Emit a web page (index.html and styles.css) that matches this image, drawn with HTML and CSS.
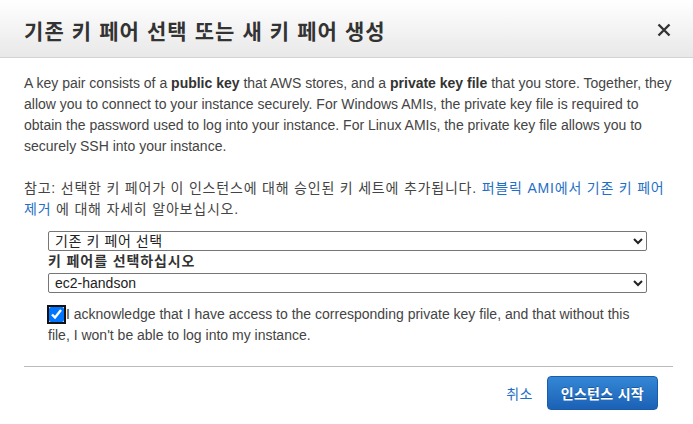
FILE: index.html
```html
<!DOCTYPE html>
<html lang="ko">
<head>
<meta charset="utf-8">
<title>기존 키 페어 선택 또는 새 키 페어 생성</title>
<link rel="stylesheet" href="styles.css">
</head>
<body>
<div class="modal">
  <header class="modal-header">
    <h1 class="modal-title">기존 키 페어 선택 또는 새 키 페어 생성</h1>
    <button class="close" type="button" aria-label="닫기">
      <svg width="14" height="14" viewBox="0 0 14 14"><path d="M1.5 1.5 L12.5 12.5 M12.5 1.5 L1.5 12.5" stroke="#333" stroke-width="2.4" fill="none"/></svg>
    </button>
  </header>
  <div class="modal-body">
    <p class="intro">A key pair consists of a <b>public key</b> that AWS stores, and a <b>private key file</b> that you store. Together, they allow you to connect to your instance securely. For Windows AMIs, the private key file is required to obtain the password used to log into your instance. For Linux AMIs, the private key file allows you to securely SSH into your instance.</p>
    <p class="note">참고: 선택한 키 페어가 이 인스턴스에 대해 승인된 키 세트에 추가됩니다. <a class="link" href="#">퍼블릭 AMI에서 기존 키 페어 제거</a> 에 대해 자세히 알아보십시오.</p>
    <div class="form">
      <select class="field ko"><option>기존 키 페어 선택</option></select>
      <label class="field-label">키 페어를 선택하십시오</label>
      <select class="field"><option>ec2-handson</option></select>
      <label class="ack"><input class="check" type="checkbox" checked>I acknowledge that I have access to the corresponding private key file, and that without this file, I won't be able to log into my instance.</label>
    </div>
  </div>
  <div class="modal-footer">
    <a class="cancel" href="#">취소</a>
    <button class="primary" type="button">인스턴스 시작</button>
  </div>
</div>
</body>
</html>
```

FILE: styles.css
```css
html, body {
  margin: 0;
  padding: 0;
  background: #fff;
}
body {
  font-family: "Liberation Sans", "Noto Sans CJK KR", Arial, sans-serif;
  color: #444;
  font-size: 14px;
}
.modal {
  width: 693px;
  height: 424px;
  background: #fff;
}
.modal-header {
  height: 57px;
  border-bottom: 1px solid #d3d3d3;
  background: linear-gradient(#ffffff, #e8e8e8);
  display: flex;
  align-items: center;
  justify-content: space-between;
  padding: 0 22px 0 24px;
  box-sizing: content-box;
}
.modal-title {
  margin: 0;
  font-size: 21px;
  font-weight: 700;
  color: #333;
  letter-spacing: 1.1px;
  padding-top: 3px;
}
.close {
  border: 0;
  background: none;
  padding: 0;
  width: 14px;
  height: 14px;
  display: flex;
  margin-top: 3px;
}
.modal-body {
  padding: 15px 20px 0 24px;
}
.intro {
  margin: 0 0 21px;
  line-height: 21px;
}
.intro b {
  color: #333;
}
.note {
  margin: 0;
  line-height: 20.5px;
  letter-spacing: 0.8px;
}
.link {
  color: #1f6fc5;
  text-decoration: none;
}
.form {
  margin: 12px 0 0 24px;
  width: 599px;
}
.field {
  display: block;
  width: 599px;
  height: 20px;
  font-family: "Liberation Sans", "Noto Sans CJK KR", Arial, sans-serif;
  font-size: 14px;
  color: #222;
  border: 1px solid #767676;
  border-radius: 2px;
  background: #fff;
  padding: 0 2px;
  margin: 0;
}
.field.ko {
  letter-spacing: 0.6px;
}
.field-label {
  display: block;
  font-weight: 700;
  color: #333;
  line-height: 20px;
  margin: 0 0 2px;
  letter-spacing: 0.9px;
}
.ack {
  display: block;
  margin-top: 11px;
  line-height: 21px;
}
.check {
  width: 15px;
  height: 15px;
  margin: 0 2px 0 1px;
  vertical-align: -3px;
  outline: 2px solid #111;
  outline-offset: 0;
  border-radius: 3px;
}
.modal-footer {
  margin: 20px 20px 0 24px;
  border-top: 1px solid #bbb;
  padding: 9px 15px 0 0;
  display: flex;
  justify-content: flex-end;
  align-items: center;
  gap: 14px;
}
.cancel {
  color: #1f6fc5;
  text-decoration: none;
  letter-spacing: 0.3px;
}
.primary {
  height: 34px;
  padding: 0 13px;
  border: 1px solid #1b5ca8;
  border-radius: 4px;
  background: linear-gradient(#3487d6, #1b61b5);
  color: #fff;
  font-family: "Liberation Sans", "Noto Sans CJK KR", Arial, sans-serif;
  font-size: 14px;
  font-weight: 700;
  text-shadow: 0 -1px 0 rgba(0, 0, 0, 0.25);
  letter-spacing: 0.3px;
}
```
